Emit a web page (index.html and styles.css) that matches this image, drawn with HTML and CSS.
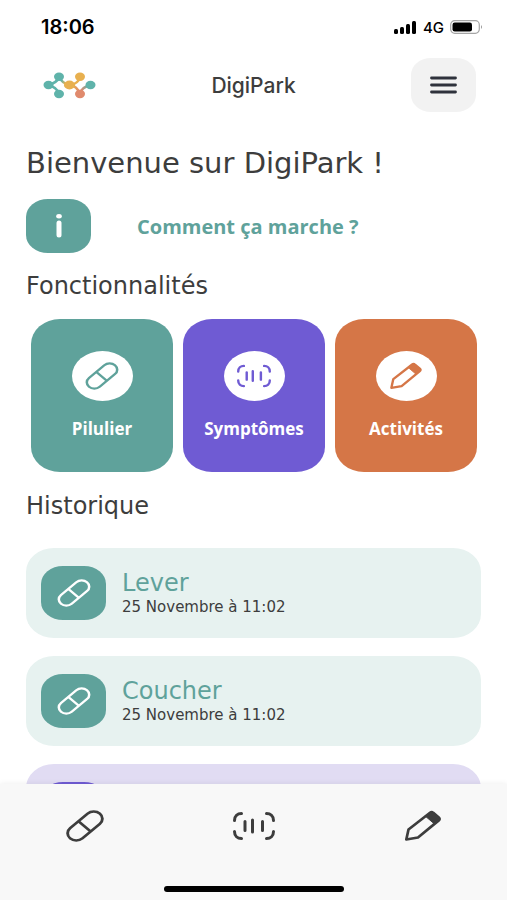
FILE: index.html
```
<!DOCTYPE html>
<html lang="fr">
<head>
    <meta charset="UTF-8">
    <meta name="viewport" content="width=device-width, initial-scale=1.0">
    <title>DigiPark</title>
    <link rel="stylesheet" href="styles.css">
</head>
<body>
    <!-- Icônes réutilisées dans la page -->
    <svg class="sprite" aria-hidden="true">
        <symbol id="icon-pill" viewBox="0 0 38 32">
            <g transform="translate(19 16) scale(1.2 1) rotate(-45)" fill="none" stroke="currentColor" stroke-width="2.4">
                <rect x="-17.5" y="-7.2" width="35" height="14.4" rx="7.2"/>
                <path d="M-0.5 -7V7"/>
            </g>
        </symbol>
        <symbol id="icon-scan" viewBox="0 0 42 28">
            <g fill="none" stroke="currentColor" stroke-width="3" stroke-linecap="round">
                <path d="M8.5 1.5C4.5 1.5 1.5 4 1.5 8.5M1.5 19.5C1.5 24 4.5 26.5 8.5 26.5M33.5 1.5C37.5 1.5 40.5 4 40.5 8.5M40.5 19.5C40.5 24 37.5 26.5 33.5 26.5"/>
                <path d="M12 9.5V18.5M19.5 8V20M29.5 9.5V18.5"/>
            </g>
        </symbol>
        <symbol id="icon-pencil" viewBox="0 0 37 32">
            <path d="M1.8 29.5L4 19.5L25.5 2.8Q27.2 1.5 28.8 2.9L34.3 7.5Q36 9 34.3 10.4L13.5 27.5Z" fill="none" stroke="currentColor" stroke-width="2.7" stroke-linejoin="round"/>
            <path d="M21 6.3L25.5 2.8Q27.2 1.5 28.8 2.9L34.3 7.5Q36 9 34.3 10.4L30 14Z" fill="currentColor" stroke="currentColor"/>
        </symbol>
    </svg>

    <div class="status-bar">
        <span class="time">18:06</span>
        <div class="status-icons">
            <svg width="23" height="13" viewBox="0 0 23 13" aria-hidden="true">
                <rect x="0" y="8" width="4" height="5" rx="1.5"/>
                <rect x="6" y="6" width="4" height="7" rx="1.5"/>
                <rect x="12" y="3" width="4" height="10" rx="1.5"/>
                <rect x="18" y="0" width="4" height="13" rx="1.5"/>
            </svg>
            <span class="network">4G</span>
            <svg width="33" height="14" viewBox="0 0 33 14" aria-hidden="true">
                <rect x="0.7" y="0.7" width="28.6" height="12.6" rx="4" fill="none" stroke="#a5a5a5" stroke-width="1.2"/>
                <rect x="2.5" y="2.5" width="19.5" height="9" rx="2.2"/>
                <path d="M31 5Q33 7 31 9Z" fill="#999"/>
            </svg>
        </div>
    </div>

    <header class="header">
        <a href="#" class="logo" aria-label="Accueil">
            <svg width="53" height="27" viewBox="0 0 53 27" aria-hidden="true">
                <defs>
                    <linearGradient id="teal-yellow" gradientUnits="userSpaceOnUse" x1="17" y1="5" x2="25" y2="12">
                        <stop offset="0.3" stop-color="#5fb3aa"/>
                        <stop offset="0.8" stop-color="#e8b04f"/>
                    </linearGradient>
                    <linearGradient id="yellow-coral" gradientUnits="userSpaceOnUse" x1="28" y1="14" x2="35" y2="21">
                        <stop offset="0" stop-color="#e8b04f"/>
                        <stop offset="1" stop-color="#e08a6d"/>
                    </linearGradient>
                    <linearGradient id="coral-teal" gradientUnits="userSpaceOnUse" x1="38" y1="21" x2="46" y2="14">
                        <stop offset="0.2" stop-color="#e08a6d"/>
                        <stop offset="1" stop-color="#5fb3aa"/>
                    </linearGradient>
                </defs>
                <g fill="none" stroke-width="2.6">
                    <path d="M16 5Q14 11 5 13Q14 15 16 22" stroke="#5fb3aa"/>
                    <path d="M16 5Q19 11 26 13" stroke="url(#teal-yellow)"/>
                    <path d="M37 5Q35 12 27 13" stroke="#e8b04f"/>
                    <path d="M27 13Q34 14 37 22" stroke="url(#yellow-coral)"/>
                    <path d="M37 22Q38 15 48 13" stroke="url(#coral-teal)"/>
                </g>
                <g fill="#5fb3aa">
                    <ellipse cx="5.5" cy="13" rx="5" ry="4.200"/>
                    <ellipse cx="16" cy="4.7" rx="5" ry="4.200"/>
                    <ellipse cx="16" cy="22" rx="5" ry="4.200"/>
                    <ellipse cx="47.5" cy="13" rx="5" ry="4.200"/>
                </g>
                <g fill="#e8b04f">
                    <ellipse cx="26.5" cy="13" rx="5.6" ry="4.400"/>
                    <ellipse cx="37" cy="4.7" rx="5" ry="4.200"/>
                </g>
                <ellipse cx="37" cy="22" rx="5" ry="4.200" fill="#e08a6d"/>
            </svg>
        </a>
        <span class="app-name">DigiPark</span>
        <button type="button" class="menu-button" aria-label="Menu">
            <svg width="27" height="18" viewBox="0 0 27 18" aria-hidden="true">
                <path d="M1.5 2H25.5M1.5 9H25.5M1.5 16H25.5" stroke="#2f323c" stroke-width="2.8" stroke-linecap="round"/>
            </svg>
        </button>
    </header>

    <main class="content">
        <h1>Bienvenue sur DigiPark !</h1>

        <a href="#" class="help">
            <span class="tile">
                <svg width="8" height="24" viewBox="0 0 8 24" aria-hidden="true">
                    <ellipse cx="4" cy="2.3" rx="2.8" ry="2.2" fill="#fff"/>
                    <path d="M4 9V21" stroke="#fff" stroke-width="5" stroke-linecap="round"/>
                </svg>
            </span>
            <span class="help-text">Comment ça marche ?</span>
        </a>

        <h2>Fonctionnalités</h2>
        <div class="features">
            <a href="#" class="feature teal">
                <span class="bubble"><svg class="icon"><use href="#icon-pill"/></svg></span>
                Pilulier
            </a>
            <a href="#" class="feature purple">
                <span class="bubble"><svg class="icon"><use href="#icon-scan"/></svg></span>
                Symptômes
            </a>
            <a href="#" class="feature orange">
                <span class="bubble"><svg class="icon"><use href="#icon-pencil"/></svg></span>
                Activités
            </a>
        </div>

        <h2>Historique</h2>
        <div class="history">
            <article class="entry">
                <span class="tile"><svg class="icon"><use href="#icon-pill"/></svg></span>
                <div>
                    <h3>Lever</h3>
                    <p>25 Novembre à 11:02</p>
                </div>
            </article>
            <article class="entry">
                <span class="tile"><svg class="icon"><use href="#icon-pill"/></svg></span>
                <div>
                    <h3>Coucher</h3>
                    <p>25 Novembre à 11:02</p>
                </div>
            </article>
            <article class="entry entry-purple">
                <span class="tile purple"></span>
            </article>
        </div>
    </main>

    <nav class="tab-bar">
        <div class="tabs">
            <a href="#" aria-label="Pilulier"><svg class="tab-icon"><use href="#icon-pill"/></svg></a>
            <a href="#" aria-label="Symptômes"><svg class="tab-icon scan"><use href="#icon-scan"/></svg></a>
            <a href="#" aria-label="Activités"><svg class="tab-icon"><use href="#icon-pencil"/></svg></a>
        </div>
        <div class="home-indicator"></div>
    </nav>
</body>
</html>
```
FILE: styles.css
```
* {
    box-sizing: border-box;
}

body {
    margin: 0;
    height: 100vh;
    display: flex;
    flex-direction: column;
    overflow: hidden;
    background-color: #fff;
    color: #3d3d3d;
    font-family: "DejaVu Sans", sans-serif;
}

a {
    color: inherit;
    text-decoration: none;
}

h1, h2, h3, p {
    margin: 0;
    font-weight: normal;
}

svg {
    display: block;
}

.sprite {
    position: absolute;
    width: 0;
    height: 0;
}

/* Barre d'état */
.status-bar {
    flex: none;
    display: flex;
    justify-content: space-between;
    align-items: center;
    height: 54px;
    padding: 0 24px 0 41px;
    color: #000;
    font-family: Inter, sans-serif;
}

.time {
    font-size: 20px;
    font-weight: 600;
}

.status-icons {
    display: flex;
    align-items: center;
    gap: 6px;
}

.network {
    font-size: 15px;
    font-weight: 500;
}

/* En-tête */
.header {
    flex: none;
    display: grid;
    grid-template-columns: 1fr auto 1fr;
    align-items: center;
    padding: 4px 31px 0;
}

.logo {
    justify-self: start;
    padding-left: 12px;
}

.app-name {
    font-family: Inter, sans-serif;
    font-size: 21px;
    font-weight: 500;
}

.menu-button {
    justify-self: end;
    display: flex;
    justify-content: center;
    align-items: center;
    width: 65px;
    height: 54px;
    padding: 0;
    border: none;
    border-radius: 20px / 17px;
    background-color: #f2f2f2;
    cursor: pointer;
}

/* Contenu */
.content {
    flex: 1;
    min-height: 0;
    overflow-y: auto;
    scrollbar-width: none;
    padding: 33px 26px 0;
}

h1 {
    font-size: 29px;
    line-height: 36px;
}

h2 {
    font-size: 24px;
    line-height: 32px;
}

.tile {
    flex: none;
    display: flex;
    justify-content: center;
    align-items: center;
    width: 65px;
    height: 54px;
    border-radius: 22px / 18px;
    background-color: #5fa29b;
    color: #fff;
}

.help {
    display: flex;
    align-items: center;
    gap: 46px;
    margin: 18px 0 17px;
}

.help-text {
    color: #5fa29b;
    font-family: "Open Sans", sans-serif;
    font-size: 20px;
    font-weight: 700;
}

.features {
    display: grid;
    grid-template-columns: repeat(3, 1fr);
    gap: 10px;
    margin: 17px 4px 18px 5px;
}

.feature {
    display: flex;
    flex-direction: column;
    align-items: center;
    gap: 16px;
    padding: 32px 0 31px;
    border-radius: 29px / 25px;
    color: #fff;
    font-family: "Open Sans", sans-serif;
    font-size: 17px;
    font-weight: 700;
    line-height: 24px;
}

.bubble {
    display: flex;
    justify-content: center;
    align-items: center;
    width: 61px;
    height: 50px;
    border-radius: 50%;
    background-color: #fff;
}

.icon {
    width: 34px;
    height: 28px;
}

.teal {
    background-color: #5fa29b;
}

.teal .bubble {
    color: #5fa29b;
}

.purple {
    background-color: #6f5bd3;
}

.purple .bubble {
    color: #6f5bd3;
}

.orange {
    background-color: #d57647;
}

.orange .bubble {
    color: #d57647;
}

/* Historique */
.history {
    display: flex;
    flex-direction: column;
    gap: 18px;
    margin-top: 26px;
}

.entry {
    display: flex;
    align-items: center;
    gap: 16px;
    padding: 18px 15px;
    border-radius: 28px / 24px;
    background-color: #e7f2f0;
}

.entry h3 {
    color: #5fa29b;
    font-size: 24px;
    line-height: 28px;
}

.entry p {
    font-size: 15px;
    line-height: 20px;
}

.entry-purple {
    background-color: #e1dcf3;
}

/* Navigation */
.tab-bar {
    flex: none;
    padding: 26px 0 8px;
    background-color: #f8f8f8;
    box-shadow: 0 0 6px rgba(0, 0, 0, 0.08);
}

.tabs {
    display: grid;
    grid-template-columns: repeat(3, 1fr);
    justify-items: center;
}

.tab-icon {
    width: 38px;
    height: 32px;
}

.tab-icon.scan {
    width: 42px;
}

.home-indicator {
    width: 180px;
    height: 6px;
    margin: 44px auto 0;
    border-radius: 3px;
    background-color: #000;
}
```
